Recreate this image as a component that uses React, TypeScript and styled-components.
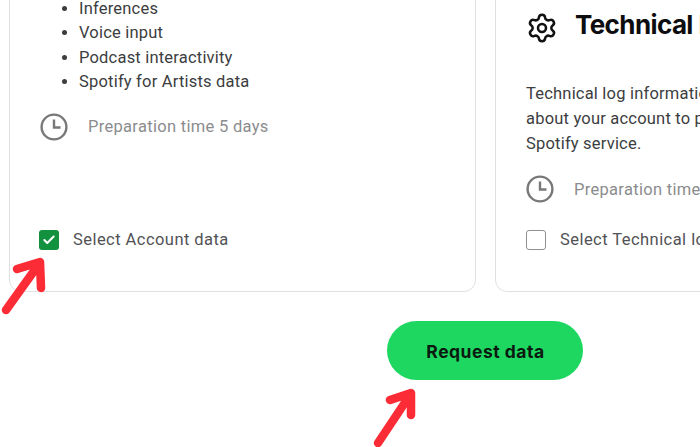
import React from 'react';
import styled, { createGlobalStyle } from 'styled-components';
import { Settings, Check } from 'lucide-react';

const Global = createGlobalStyle`
  html, body {margin: 0;padding: 0;background: #fff;}
  body {font-family: Roboto, "Liberation Sans", sans-serif;}
`
const Page = styled.div`
  position: relative;
  width: 700px;
  height: 447px;
  overflow: hidden;
  display: flex;
  flex-direction: column;
  align-items: flex-start;
`
const Cards = styled.div`
  display: flex;
  gap: 19px;
  width: 700px;
  height: 312px;
  margin-top: -20px;
  padding-left: 9px;
  box-sizing: border-box;
  flex-shrink: 0;
`
const Card = styled.section`
  flex: 0 0 auto;
  width: ${p => p.$width}px;
  box-sizing: border-box;
  border: 1px solid #dfe0e2;
  border-radius: 12px;
  padding: ${p => p.$top}px 0 41px 30px;
  display: flex;
  flex-direction: column;
  align-items: flex-start;
`
const Bullets = styled.ul`
  margin: 0;
  padding: 0 0 0 39px;
  color: #3c3d40;
  font-size: 16.5px;
  line-height: 24.4px;
  letter-spacing: 0.2px;
`
const Prep = styled.div`
  display: flex;
  align-items: center;
  gap: ${p => p.$gap}px;
  margin-top: ${p => p.$top}px;
  color: #8b8c8e;
  font-size: 16.5px;
  letter-spacing: 0.3px;
  white-space: nowrap;
  svg {display: block;flex-shrink: 0;}
`
const Heading = styled.h2`
  display: flex;
  align-items: center;
  gap: 17px;
  height: 32px;
  margin: 0;
  color: #0d0d10;
  font-family: Inter, "Liberation Sans", sans-serif;
  font-size: 26px;
  font-weight: 700;
  line-height: 32px;
  letter-spacing: -0.6px;
  white-space: nowrap;
  svg {display: block;flex-shrink: 0;margin: 3px 0 -3px;}
`
const Body = styled.p`
  margin: 40px 0 0;
  width: 200px;
  white-space: nowrap;
  color: #3c3d40;
  font-size: 16.5px;
  line-height: 25px;
  letter-spacing: 0.2px;
`
const Select = styled.label`
  display: flex;
  align-items: center;
  gap: 14px;
  margin-top: auto;
  margin-left: ${p => p.$shift || 0}px;
  color: #515255;
  font-size: 16.5px;
  line-height: 20px;
  letter-spacing: 0.45px;
  white-space: nowrap;
`
const Box = styled.span`
  width: 20px;
  height: 20px;
  box-sizing: border-box;
  display: flex;
  align-items: center;
  justify-content: center;
  border-radius: 3px;
  border: ${p => p.$checked ? 'none' : '1.5px solid #8e8f92'};
  background: ${p => p.$checked ? '#12923f' : '#fff'};
`
const RequestButton = styled.button`
  width: 196px;
  height: 59px;
  flex-shrink: 0;
  margin: 29px 0 0 387px;
  padding: 2px 0 0 1px;
  border: none;
  border-radius: 30px;
  background: #1ed760;
  color: #0b1a10;
  font-family: Inter, "Liberation Sans", sans-serif;
  font-size: 17.5px;
  font-weight: 700;
  letter-spacing: 0.5px;
`
const Arrow = styled.svg`
  position: absolute;
  left: ${p => p.$left}px;
  top: ${p => p.$top}px;
  fill: none;
  stroke: #fb2c35;
  stroke-width: 8.5;
  stroke-linecap: round;
  stroke-linejoin: round;
`

function ClockIcon() {
  return (
    <svg width="28" height="28" viewBox="0 0 28 28" fill="none" stroke="#77787a" strokeWidth="2.4">
      <circle cx="14" cy="14" r="12.4" />
      <path d="M14 6.5V14.5H20.5" />
    </svg>
  )
}

function App() {
  return (
    <Page>
      <Global />
      <Cards>
        <Card $width={467} $top={16}>
          <Bullets>
            <li>Inferences</li>
            <li>Voice input</li>
            <li>Podcast interactivity</li>
            <li>Spotify for Artists data</li>
          </Bullets>
          <Prep $gap={20} $top={18}><ClockIcon />Preparation time 5 days</Prep>
          <Select $shift={-1}>
            <Box $checked><Check size={14} color="#fff" strokeWidth={3.5} /></Box>
            Select Account data
          </Select>
        </Card>
        <Card $width={400} $top={28}>
          <Heading><Settings size={32} color="#111" strokeWidth={1.9} />Technical log information</Heading>
          <Body>
            Technical log information<br />
            about your account to provide the<br />
            Spotify service.
          </Body>
          <Prep $gap={20} $top={19}><ClockIcon />Preparation time 5 days</Prep>
          <Select><Box />Select Technical log information</Select>
        </Card>
      </Cards>
      <RequestButton>Request data</RequestButton>
      <Arrow $left={0} $top={255} width="50" height="65" viewBox="0 0 50 65">
        <path d="M6 55L39 9M17 14L40 7L41 33" />
      </Arrow>
      <Arrow $left={370} $top={385} width="50" height="62" viewBox="0 0 50 62">
        <path d="M8 58L40 10M20 15L41 8L41 30" />
      </Arrow>
    </Page>
  )
}
export default App
